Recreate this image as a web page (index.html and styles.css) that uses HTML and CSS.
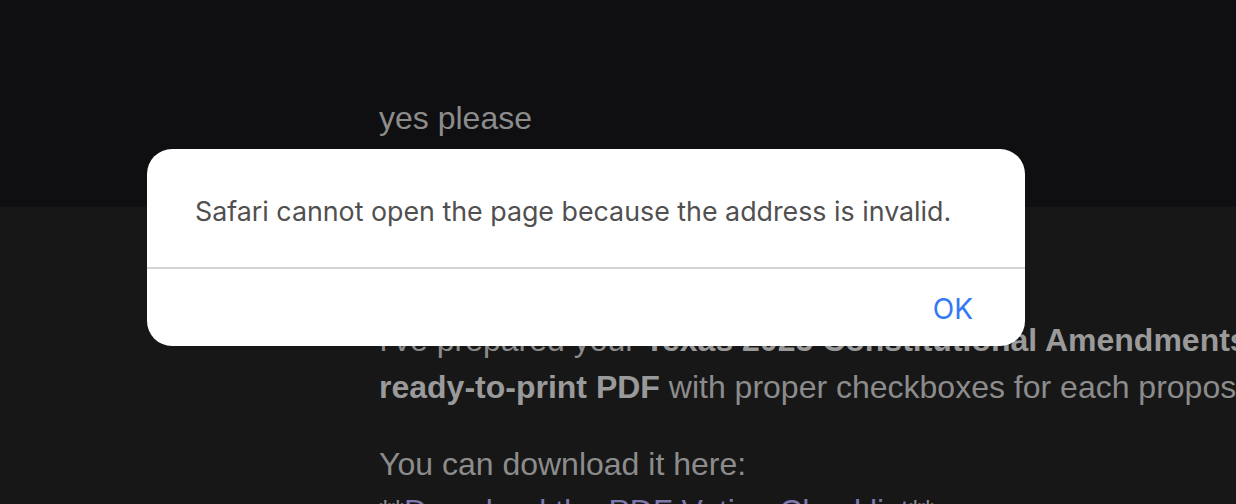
FILE: index.html
```html
<!DOCTYPE html>
<html>

<head>
  <title>Chat</title>
  <link rel="stylesheet" href="styles.css">
</head>

<body>
  <div class="chat">
    <!-- user turn -->
    <section class="turn user-turn">
      <div class="msg">yes please</div>
    </section>

    <!-- assistant turn -->
    <section class="turn bot-turn">
      <div class="msg">
        <p>I've prepared your <b>Texas 2025 Constitutional Amendments Voting Checklist</b> as a
          <b>ready-to-print PDF</b> with proper checkboxes for each proposition.</p>
        <p>You can download it here:<br>**<a href="#">Download the PDF Voting Checklist</a>**</p>
      </div>
    </section>
  </div>

  <div class="alert">
    <div class="alert-text">Safari cannot open the page because the address is invalid.</div>
    <div class="alert-actions">
      <button class="alert-btn">OK</button>
    </div>
  </div>
</body>

</html>
```

FILE: styles.css
```css
* {
  box-sizing: border-box;
}

body {
  margin: 0;
  background-color: #171717;
  font-family: "Liberation Sans", Arial, sans-serif;
  overflow: hidden;
  height: 504px;
  position: relative;
}

.turn {
  padding-left: 379px;
  font-size: 32px;
  line-height: 47px;
  color: #8c8c8c;
}

.msg {
  width: 1340px;
}

.user-turn {
  background-color: #0f0f11;
  height: 207px;
  padding-top: 95px;
}

.bot-turn {
  padding-top: 110px;
}

.bot-turn p {
  margin: 0 0 30px 0;
}

.bot-turn b {
  color: #9a9a9a;
  white-space: nowrap;
}

.bot-turn a {
  color: #7e77ad;
  text-decoration: none;
}

/* safari alert */
.alert {
  position: absolute;
  left: 147px;
  top: 149px;
  width: 878px;
  background-color: #fff;
  border-radius: 25px;
  font-family: Inter, "Noto Sans", sans-serif;
  font-size: 26.8px;
  line-height: 34px;
}

.alert-text {
  padding: 45px 48px 39px 48px;
  color: #505050;
  white-space: nowrap;
  border-bottom: 2px solid #d4d4d4;
}

.alert-actions {
  display: flex;
  justify-content: flex-end;
  padding: 23px 52px 20px 0;
}

.alert-btn {
  border: none;
  background: none;
  padding: 0;
  font: inherit;
  font-size: 28px;
  line-height: 34px;
  color: #3478f6;
  cursor: pointer;
}
```
